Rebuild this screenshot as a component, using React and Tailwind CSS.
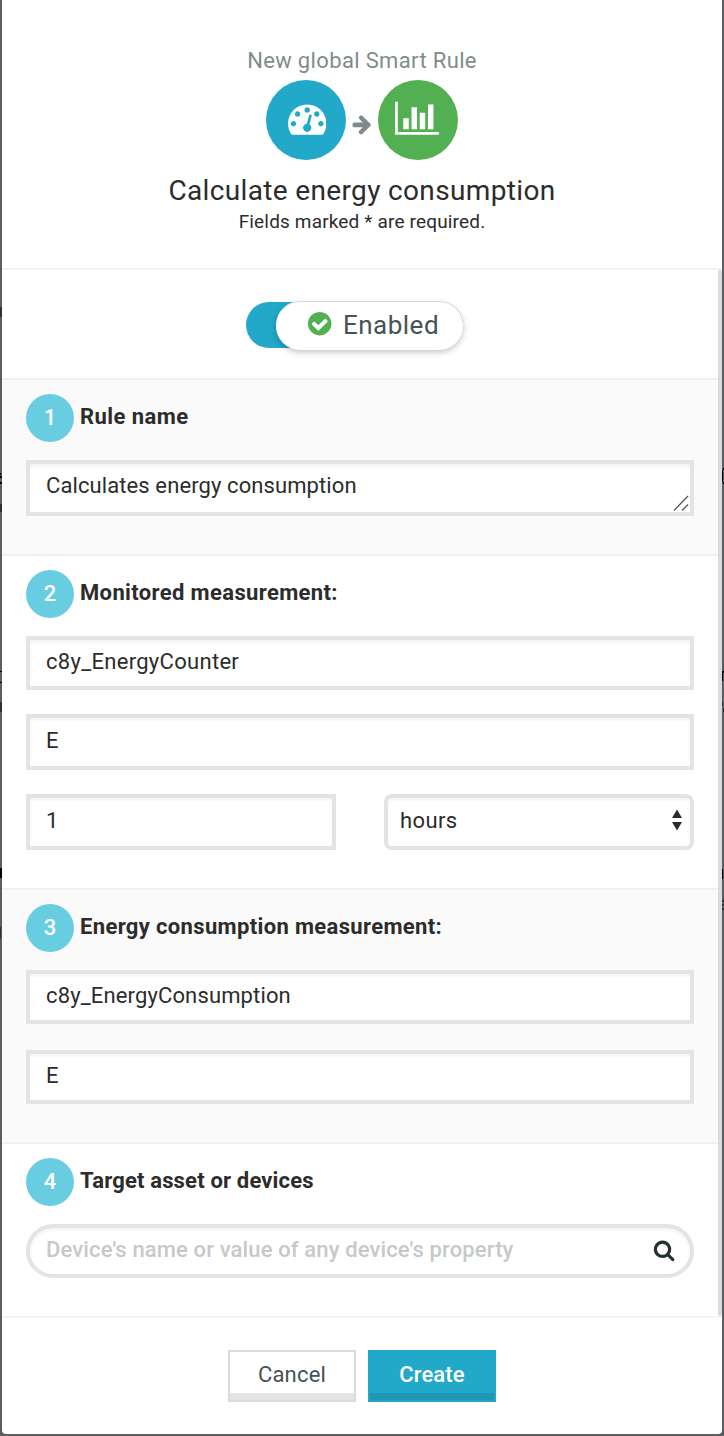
function Icon({ d, box = "0 0 1792 1792", className }) {
  return (
    <svg viewBox={box} className={className} fill="currentColor" aria-hidden="true">
      <path d={d} />
    </svg>
  );
}

const GAUGE =
  "M384 1152q0-53-37.5-90.5t-90.5-37.5-90.5 37.5-37.5 90.5 37.5 90.5 90.5 37.5 90.5-37.5 37.5-90.5zm192-448q0-53-37.5-90.5t-90.5-37.5-90.5 37.5-37.5 90.5 37.5 90.5 90.5 37.5 90.5-37.5 37.5-90.5zm428 481l101-382q6-26-7.5-48.5t-38.5-29.5-48 6.5-30 39.5l-101 382q-60 5-107 43.5t-63 98.5q-20 77 20 146t117 89 146-20 89-117q16-60-6-117t-72-91zm660-33q0-53-37.5-90.5t-90.5-37.5-90.5 37.5-37.5 90.5 37.5 90.5 90.5 37.5 90.5-37.5 37.5-90.5zm-640-640q0-53-37.5-90.5t-90.5-37.5-90.5 37.5-37.5 90.5 37.5 90.5 90.5 37.5 90.5-37.5 37.5-90.5zm448 192q0-53-37.5-90.5t-90.5-37.5-90.5 37.5-37.5 90.5 37.5 90.5 90.5 37.5 90.5-37.5 37.5-90.5zm320 448q0 261-141 483-19 29-54 29h-1402q-35 0-54-29-141-221-141-483 0-182 71-348t191-286 286-191 348-71 348 71 286 191 191 286 71 348z";
const CHART =
  "M640 896v512h-256v-512h256zm384-512v1024h-256v-1024h256zm1024 1152v128h-2048v-1536h128v1408h1920zm-640-896v768h-256v-768h256zm384-384v1152h-256v-1152h256z";
const ARROW =
  "M1600 960q0 54-37 91l-651 651q-39 37-91 37-51 0-90-37l-75-75q-38-38-38-91t38-91l293-293h-704q-52 0-84.5-37.5t-32.5-90.5v-128q0-53 32.5-90.5t84.5-37.5h704l-293-294q-38-36-38-90t38-90l75-75q38-38 90-38 53 0 91 38l651 651q37 35 37 90z";
const CHECK =
  "M1412 734q0-28-18-46l-91-90q-19-19-45-19t-45 19l-408 407-226-226q-19-19-45-19t-45 19l-91 90q-18 18-18 46 0 27 18 45l362 362q19 19 45 19 27 0 46-19l543-543q18-18 18-45zm252 162q0 209-103 385.5t-279.5 279.5-385.5 103-385.5-103-279.5-279.5-103-385.5 103-385.5 279.5-279.5 385.5-103 385.5 103 279.5 279.5 103 385.5z";
const SEARCH =
  "M1216 832q0-185-131.5-316.5t-316.5-131.5-316.5 131.5-131.5 316.5 131.5 316.5 316.5 131.5 316.5-131.5 131.5-316.5zm512 832q0 52-38 90t-90 38q-54 0-90-38l-343-342q-179 124-399 124-143 0-273.5-55.5t-225-150-150-225-55.5-273.5 55.5-273.5 150-225 225-150 273.5-55.5 273.5 55.5 225 150 150 225 55.5 273.5q0 220-124 399l343 343q37 37 37 90z";

function Section({ n, title, titleClass, className, children }) {
  return (
    <section className={`border-t-2 px-6 pt-3.5 ${className}`}>
      <div className="flex h-12 items-center">
        <span className="flex size-12 items-center justify-center rounded-full bg-[#69cde2] pb-0.5 text-[22px] font-medium text-white">
          {n}
        </span>
        <h2 className={`ml-1.5 pb-0.5 text-[22px] leading-7 font-bold whitespace-nowrap text-[#2c2c2c] ${titleClass}`}>
          {title}
        </h2>
      </div>
      {children}
    </section>
  );
}

function Field({ className, children }) {
  return (
    <div
      className={`flex items-center border-4 border-[#e2e4e5] bg-white pl-4 text-[22px] whitespace-nowrap shadow-[inset_0_2px_3px_rgba(0,0,0,0.05)] ${className}`}
    >
      {children}
    </div>
  );
}

export default function App() {
  return (
    <div className="relative h-[1436px] w-[724px] overflow-hidden bg-[#5c5d5e] px-0.5 font-['Roboto',sans-serif] text-[#2c2c2c]">
      <div className="absolute inset-y-0 left-0 w-0.5 bg-[#5c5d5e]" aria-hidden="true">
        <div className="absolute top-[307px] left-0 h-2.5 w-0.5 bg-[#2b3032]" />
        <div className="absolute top-[473px] left-0 h-0.5 w-px bg-black" />
        <div className="absolute top-[476px] left-0 h-0.5 w-0.5 bg-black" />
        <div className="absolute top-[482px] left-0 h-0.5 w-0.5 bg-black" />
        <div className="absolute top-[504px] left-0 h-2 w-0.5 bg-[#2b3032]" />
        <div className="absolute top-[671px] left-0 h-px w-0.5 bg-black" />
        <div className="absolute top-[682px] left-0 h-px w-0.5 bg-black" />
        <div className="absolute top-[702px] left-0 h-2.5 w-0.5 bg-[#2b3032]" />
        <div className="absolute top-[868px] left-0 h-2.5 w-0.5 bg-black" />
        <div className="absolute top-[927px] left-0 h-3 w-px bg-[#2b3032]" />
      </div>
      <div className="absolute inset-y-0 right-0 w-0.5 bg-[#5c5d5e]" aria-hidden="true">
        <div className="absolute top-[468px] right-0 h-0.5 w-px bg-black" />
        <div className="absolute top-[470px] left-0 h-3 w-px bg-black" />
        <div className="absolute top-[482px] right-0 h-0.5 w-px bg-black" />
        <div className="absolute top-[671px] left-0 h-0.5 w-0.5 bg-black" />
        <div className="absolute top-[673px] left-0 h-2 w-px bg-black" />
        <div className="absolute top-[702px] left-0 h-1 w-px bg-[#2b3032]" />
        <div className="absolute top-[708px] right-0 h-1 w-px bg-[#2b3032]" />
        <div className="absolute top-[869px] left-0 h-2.5 w-px bg-black" />
        <div className="absolute top-[900px] left-0 h-0.5 w-0.5 bg-[#2b3032]" />
        <div className="absolute top-[904px] left-0 h-0.5 w-0.5 bg-[#2b3032]" />
        <div className="absolute top-[908px] left-0 h-0.5 w-0.5 bg-[#2b3032]" />
      </div>

      <div className="flex h-[1434px] w-[720px] flex-col rounded-b bg-white">
        <header className="flex h-[268px] flex-col items-center pt-[47px]">
          <p className="text-[22px] leading-7 tracking-[0.35px] whitespace-nowrap text-[#7f8c8b]">New global Smart Rule</p>
          <div className="mt-[5px] flex h-20 items-center">
            <span className="flex size-20 items-center justify-center rounded-full bg-[#22a9c9] text-white">
              <Icon d={GAUGE} className="mb-[3px] ml-0.5 size-[38.4px]" />
            </span>
            <Icon d={ARROW} className="mx-[4.9px] mt-2 size-[22.2px] text-[#7f8c8b]" />
            <span className="flex size-20 items-center justify-center rounded-full bg-[#52b052] text-white">
              <Icon d={CHART} box="0 0 2048 1792" className="mr-0.5 mb-[3px] h-[38.4px] w-11" />
            </span>
          </div>
          <h1 className="mt-[13px] text-[28px] leading-9 tracking-[0.35px] whitespace-nowrap">Calculate energy consumption</h1>
          <p className="mt-px text-[19px] leading-6 tracking-[0.16px] whitespace-nowrap">Fields marked * are required.</p>
        </header>

        <div className="h-0.5 shrink-0 bg-[#f3f3f3]" />
        <main className="flex h-[1046px]">
          <div className="w-[716px]">
            <div className="flex h-[108px] justify-center pt-8">
              <div className="mr-3 h-[46px] w-[217px] rounded-full bg-[#22a9c9] pl-[30px]">
                <div className="flex h-12 w-[187px] items-center rounded-full bg-white pl-[30px] shadow-[0_2px_6px_rgba(0,0,0,0.25),0_-1px_0_#daeef2]">
                  <Icon d={CHECK} className="mb-1 size-[27.4px] text-[#52b052]" />
                  <span className="mb-0.5 ml-2.5 text-[26px] tracking-[0.5px] text-[#455357]">Enabled</span>
                </div>
              </div>
            </div>

            <Section n="1" title="Rule name" titleClass="tracking-[0.45px]" className="h-[176px] border-[#f1f1f1] bg-[#fafafa]">
              <Field className="relative mt-[18px] h-14 pb-1.5 tracking-[0.1px]">
                Calculates energy consumption
                <svg viewBox="0 0 16 16" className="absolute right-px bottom-px size-4" stroke="#555" strokeWidth="1.3" fill="none">
                  <path d="M1 15.5L15 1M9 15.5L15 9.5" />
                </svg>
              </Field>
            </Section>

            <Section n="2" title="Monitored measurement:" titleClass="tracking-[0.36px]" className="h-[334px] border-[#f1f1f1]">
              <Field className="mt-[18px] h-[54px] pb-1 tracking-[0.3px]">c8y_EnergyCounter</Field>
              <Field className="mt-6 h-14 pb-[3px]">E</Field>
              <div className="mt-6 flex gap-12">
                <Field className="h-14 w-[310px] pb-[3px]">1</Field>
                <div className="flex h-14 w-[310px] items-center justify-between rounded-lg border-4 border-[#e2e4e5] bg-white pr-2 pl-3 text-[22px] shadow-[inset_0_2px_3px_rgba(0,0,0,0.05)]">
                  <span className="pb-[3px] tracking-[0.4px]">hours</span>
                  <svg viewBox="0 0 10 22" className="mb-1 h-[22px] w-2.5" fill="#2c2c2c">
                    <path d="M5 .5L10 9H0zM5 21.5L10 13H0z" />
                  </svg>
                </div>
              </div>
            </Section>

            <Section
              n="3"
              title="Energy consumption measurement:"
              titleClass="tracking-[0.35px]"
              className="h-[254px] border-[#f1f1f1] bg-[#fafafa]"
            >
              <Field className="mt-[18px] h-[54px] pb-1 tracking-[0.14px]">c8y_EnergyConsumption</Field>
              <Field className="mt-[26px] h-[54px] pb-1">E</Field>
            </Section>

            <Section n="4" title="Target asset or devices" titleClass="tracking-[0.17px]" className="h-[174px] border-[#f1f1f1]">
              <div className="mt-[18px] flex h-[54px] items-center justify-between rounded-full border-4 border-[#e2e4e5] pr-[15px] pl-4 shadow-[inset_0_2px_3px_rgba(0,0,0,0.05)]">
                <span className="pb-1 text-[22px] font-medium tracking-[0.13px] whitespace-nowrap text-[#c5c9c9]">
                  Device's name or value of any device's property
                </span>
                <Icon d={SEARCH} className="mb-px size-[22.2px] text-[#263133]" />
              </div>
            </Section>
          </div>
          <div className="w-1 rounded-sm bg-[#d8dcdd]" />
        </main>

        <footer className="flex justify-center gap-3 border-t-2 border-[#f4f4f4] pt-8">
          <button className="h-[52px] w-32 border-2 border-[#d9dddd] pb-1 text-[22px] tracking-[0.2px] text-[#455357] shadow-[inset_0_-7px_0_#e4e4e4]">
            Cancel
          </button>
          <button className="h-[52px] w-32 border-2 border-[#22a9c9] bg-[#22a9c9] pb-1 text-[22px] font-medium tracking-[0.1px] text-white shadow-[inset_0_-7px_0_#2098b5]">
            Create
          </button>
        </footer>
      </div>
    </div>
  );
}
